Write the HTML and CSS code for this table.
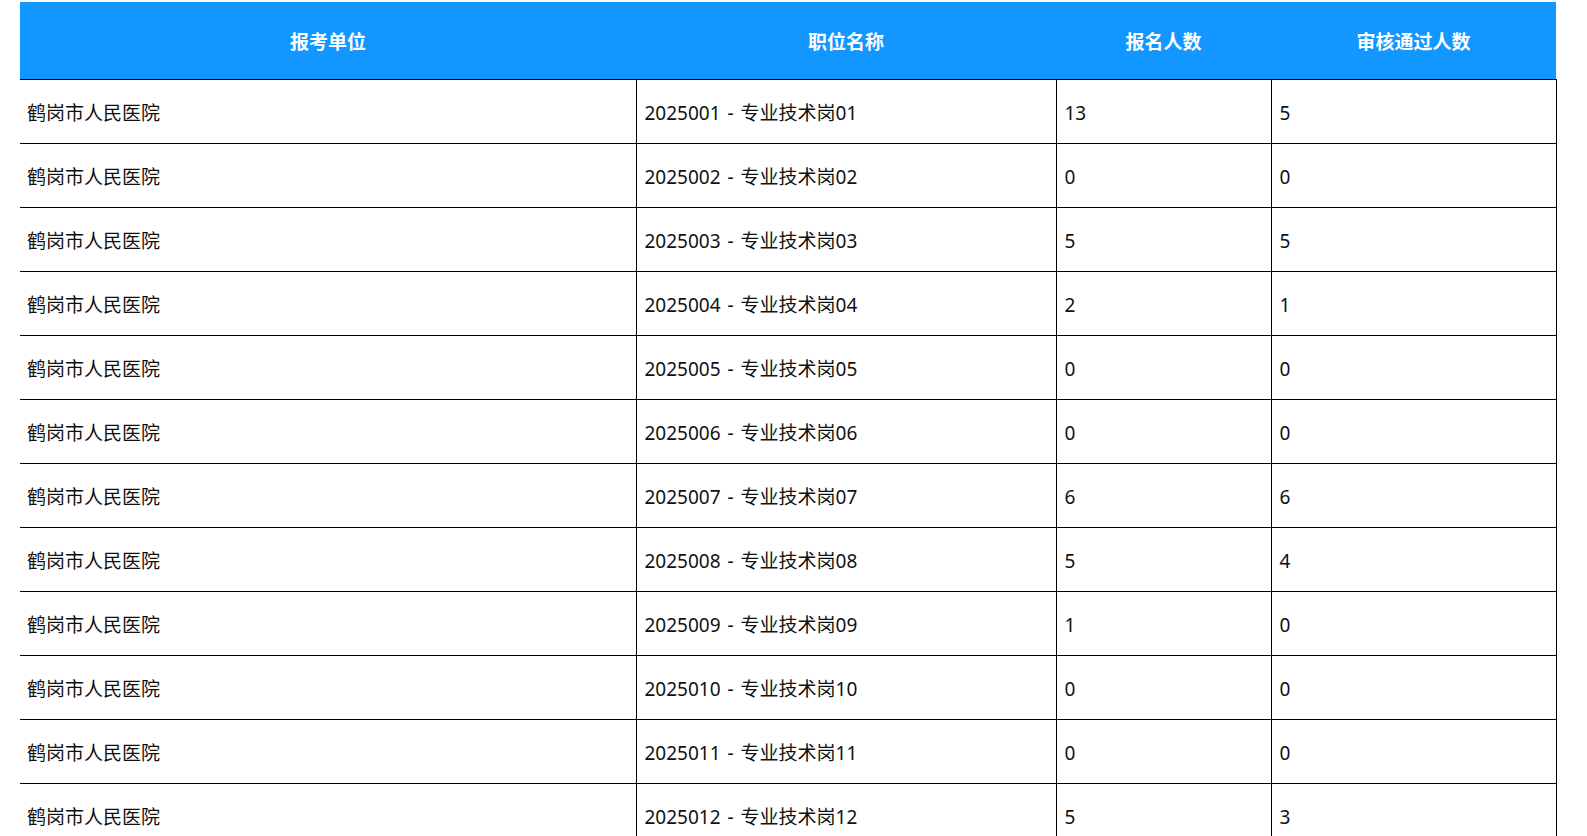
FILE: index.html
```html
<!DOCTYPE html>
<html lang="zh-CN">
<head>
<meta charset="utf-8">
<title>报名人数</title>
<link rel="stylesheet" href="styles.css">
</head>
<body>
<div class="page">
<table class="grid">
  <colgroup>
    <col class="c1"><col class="c2"><col class="c3"><col class="c4">
  </colgroup>
  <thead>
    <tr><th>报考单位</th><th>职位名称</th><th>报名人数</th><th>审核通过人数</th></tr>
  </thead>
  <tbody>
    <tr><td>鹤岗市人民医院</td><td class="pos">2025001 - 专业技术岗01</td><td>13</td><td>5</td></tr>
    <tr><td>鹤岗市人民医院</td><td class="pos">2025002 - 专业技术岗02</td><td>0</td><td>0</td></tr>
    <tr><td>鹤岗市人民医院</td><td class="pos">2025003 - 专业技术岗03</td><td>5</td><td>5</td></tr>
    <tr><td>鹤岗市人民医院</td><td class="pos">2025004 - 专业技术岗04</td><td>2</td><td>1</td></tr>
    <tr><td>鹤岗市人民医院</td><td class="pos">2025005 - 专业技术岗05</td><td>0</td><td>0</td></tr>
    <tr><td>鹤岗市人民医院</td><td class="pos">2025006 - 专业技术岗06</td><td>0</td><td>0</td></tr>
    <tr><td>鹤岗市人民医院</td><td class="pos">2025007 - 专业技术岗07</td><td>6</td><td>6</td></tr>
    <tr><td>鹤岗市人民医院</td><td class="pos">2025008 - 专业技术岗08</td><td>5</td><td>4</td></tr>
    <tr><td>鹤岗市人民医院</td><td class="pos">2025009 - 专业技术岗09</td><td>1</td><td>0</td></tr>
    <tr><td>鹤岗市人民医院</td><td class="pos">2025010 - 专业技术岗10</td><td>0</td><td>0</td></tr>
    <tr><td>鹤岗市人民医院</td><td class="pos">2025011 - 专业技术岗11</td><td>0</td><td>0</td></tr>
    <tr><td>鹤岗市人民医院</td><td class="pos">2025012 - 专业技术岗12</td><td>5</td><td>3</td></tr>
  </tbody>
</table>
</div>
</body>
</html>
```

FILE: styles.css
```css
html, body {
  margin: 0;
  padding: 0;
  background: #ffffff;
}
body {
  font-family: "Noto Sans", "Noto Sans CJK SC", sans-serif;
  color: #111;
  overflow: hidden;
}
.page {
  padding: 2px 31px 0 20px;
}
.grid {
  width: 1536px;
  border-collapse: collapse;
  table-layout: fixed;
}
.c1 { width: 616px; }
.c2 { width: 420px; }
.c3 { width: 215px; }
.c4 { width: 285px; }

.grid th {
  background: #1296ff;
  color: #ffffff;
  font-family: "Noto Sans CJK SC", sans-serif;
  font-weight: 700;
  font-size: 19px;
  height: 77px;
  padding: 0;
  text-align: center;
  vertical-align: middle;
  border-bottom: 1px solid #000;
}
.grid td {
  height: 61px;
  padding: 2px 8px 0;
  font-size: 19px;
  line-height: 24px;
  text-align: left;
  vertical-align: middle;
  border-bottom: 1px solid #000;
  white-space: nowrap;
}
.grid td + td {
  border-left: 1px solid #000;
}
.grid td:first-child {
  padding-left: 7px;
}
.grid td:last-child {
  border-right: 1px solid #000;
}
.grid td.pos {
  word-spacing: 2px;
}
```
